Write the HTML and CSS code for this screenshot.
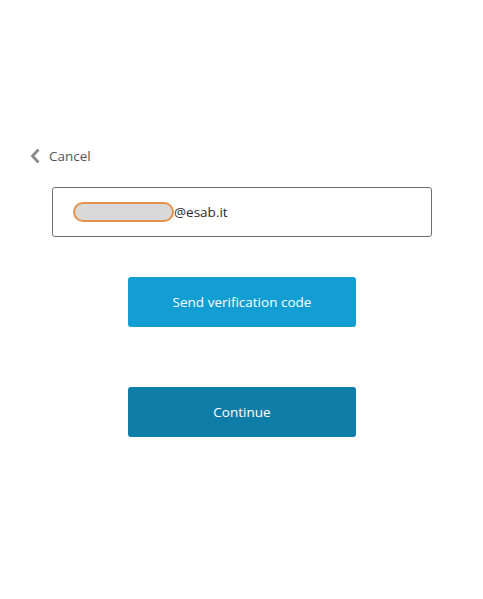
FILE: index.html
```html
<!DOCTYPE html>
<html lang="it">
<head>
<meta charset="utf-8">
<title>Verifica email</title>
<link rel="stylesheet" href="styles.css">
</head>
<body>
<main class="page">
  <a class="cancel" href="#">
    <svg class="cancel-icon" width="11" height="16" viewBox="0 0 11 16" aria-hidden="true">
      <path d="M8.5 1.5 L2.5 8 L8.5 14.5" fill="none" stroke="#8a8a8a" stroke-width="2.8"/>
    </svg>
    <span>Cancel</span>
  </a>
  <div class="field">
    <span class="mask"></span><span class="domain">@esab.it</span>
  </div>
  <button class="btn btn-send" type="button">Send verification code</button>
  <button class="btn btn-continue" type="button">Continue</button>
</main>
</body>
</html>
```
FILE: styles.css
```css
html, body {
  margin: 0;
  background: #ffffff;
}

.page {
  display: flex;
  flex-direction: column;
  align-items: flex-start;
  padding-top: 146px;
  font-family: "Open Sans", "Noto Sans", sans-serif;
  font-size: 13px;
  color: #333333;
}

.cancel {
  display: flex;
  align-items: center;
  gap: 8px;
  margin-left: 30px;
  height: 20px;
  color: #555555;
  text-decoration: none;
  font-size: 13.5px;
}

.cancel-icon {
  display: block;
}

.field {
  display: flex;
  align-items: center;
  box-sizing: border-box;
  margin: 21px 0 0 52px;
  width: 380px;
  height: 50px;
  padding-left: 20px;
  border: 1px solid #6e6e6e;
  border-radius: 3px;
}

.mask {
  box-sizing: border-box;
  width: 101px;
  height: 20px;
  border: 2px solid #e5904d;
  border-radius: 10px;
  background: #d9d9d9;
}

.domain {
  font-size: 13.5px;
  color: #2a2a2a;
}

.btn {
  box-sizing: border-box;
  margin-left: 128px;
  width: 228px;
  height: 50px;
  border: none;
  border-radius: 3px;
  color: #ffffff;
  font-family: inherit;
  font-size: 13.5px;
  cursor: pointer;
}

.btn-send {
  margin-top: 40px;
  background: #129ed2;
}

.btn-continue {
  margin-top: 60px;
  background: #0e7ea9;
}
```
